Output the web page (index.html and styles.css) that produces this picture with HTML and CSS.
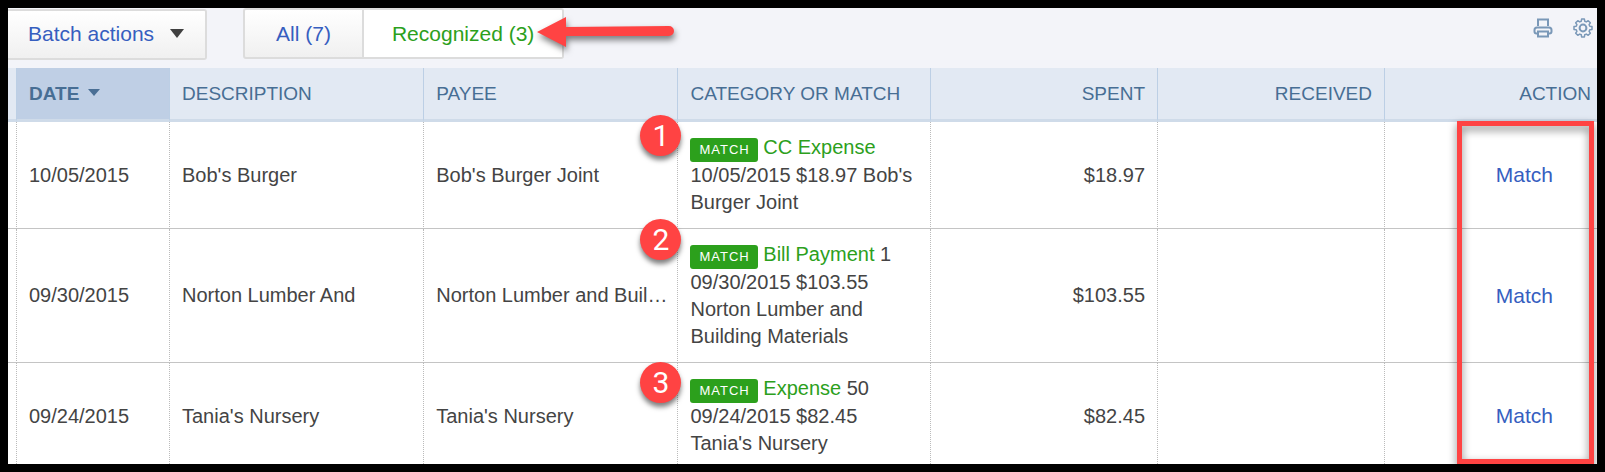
FILE: index.html
```html
<!DOCTYPE html>
<html lang="en">
<head>
  <meta charset="UTF-8" />
  <title>Bank transactions</title>
  <link rel="stylesheet" href="styles.css">
</head>
<body>
  <main class="panel">
    <div class="toolbar">
      <button type="button" class="batch">Batch actions <span class="caret"></span></button>

      <div class="tabs">
        <button type="button" class="tab">All (7)</button>
        <button type="button" class="tab active">Recognized (3)</button>
        <svg class="arrow" width="150" height="46" viewBox="0 0 150 46" aria-hidden="true">
          <path d="M2 20 L31 5 V15 L134 14 A5 5 0 0 1 134 24 L31 24 V35 Z" fill="#ff4343"/>
        </svg>
      </div>

      <div class="tools">
        <button type="button" class="icon" aria-label="Print">
          <svg width="20" height="20" viewBox="0 0 20 20" fill="none" stroke="#7a98b8" stroke-width="2">
            <path d="M5 8 V1.500 H15 V8" stroke-width="2"/>
            <path d="M5 15.500 H3.500 Q1.500 15.500 1.500 13.500 V12 Q1.500 9.500 4 9.500 H16 Q18.500 9.500 18.500 12 V13.500 Q18.500 15.500 16.500 15.500 H15"/>
            <path d="M5 13.500 H15 V18.500 H5 Z"/>
          </svg>
        </button>
        <button type="button" class="icon" aria-label="Settings">
          <svg width="20" height="20" viewBox="0 0 20 20" fill="none" stroke="#7a98b8" stroke-width="1.5" stroke-linejoin="round">
            <path d="M8.600 1 H11.400 L11.700 3.200 L13.300 3.900 L15.200 2.700 L17.300 4.800 L16.100 6.700 L16.800 8.300 L19 8.600 V11.400 L16.800 11.700 L16.100 13.300 L17.300 15.200 L15.200 17.300 L13.300 16.100 L11.700 16.800 L11.400 19 H8.600 L8.300 16.800 L6.700 16.100 L4.800 17.300 L2.700 15.200 L3.900 13.300 L3.200 11.700 L1 11.400 V8.600 L3.200 8.300 L3.900 6.700 L2.700 4.800 L4.800 2.700 L6.700 3.900 L8.300 3.200 Z"/>
            <circle cx="10" cy="10" r="3.400" stroke-width="2"/>
          </svg>
        </button>
      </div>
    </div>

    <table>
      <colgroup>
        <col class="col-edge">
        <col class="col-date">
        <col class="col-text">
        <col class="col-text">
        <col>
        <col class="col-amount">
        <col class="col-amount">
        <col class="col-action">
      </colgroup>
      <thead>
        <tr>
          <td class="edge"></td>
          <th class="sorted">DATE <span class="caret small"></span></th>
          <th>DESCRIPTION</th>
          <th>PAYEE</th>
          <th>CATEGORY OR MATCH</th>
          <th class="num">SPENT</th>
          <th class="num">RECEIVED</th>
          <th class="num last">ACTION</th>
        </tr>
      </thead>
      <tbody>
        <tr>
          <td class="edge"></td>
          <td>10/05/2015</td>
          <td>Bob's Burger</td>
          <td class="payee">Bob's Burger Joint</td>
          <td>
            <span class="pin pin-1">1</span>
            <span class="badge">MATCH</span> <span class="kind">CC Expense</span><br>10/05/2015 $18.97 Bob's Burger Joint
          </td>
          <td class="num">$18.97</td>
          <td class="num"></td>
          <td class="action"><a href="#">Match</a></td>
        </tr>
        <tr>
          <td class="edge"></td>
          <td>09/30/2015</td>
          <td>Norton Lumber And</td>
          <td class="payee" title="Norton Lumber and Building Materials">Norton Lumber and Buil…</td>
          <td>
            <span class="pin pin-2">2</span>
            <span class="badge">MATCH</span> <span class="kind">Bill Payment</span> 1<br>09/30/2015 $103.55 Norton Lumber and Building Materials
          </td>
          <td class="num">$103.55</td>
          <td class="num"></td>
          <td class="action"><a href="#">Match</a></td>
        </tr>
        <tr>
          <td class="edge"></td>
          <td>09/24/2015</td>
          <td>Tania's Nursery</td>
          <td class="payee">Tania's Nursery</td>
          <td>
            <span class="pin pin-3">3</span>
            <span class="badge">MATCH</span> <span class="kind">Expense</span> 50<br>09/24/2015 $82.45 Tania's Nursery
          </td>
          <td class="num">$82.45</td>
          <td class="num"></td>
          <td class="action"><a href="#">Match</a></td>
        </tr>
      </tbody>
    </table>

    <!-- marks the action column -->
    <div class="highlight"></div>
  </main>
</body>
</html>
```

FILE: styles.css
```css
* {
  box-sizing: border-box;
}

body {
  margin: 0;
  height: 100vh;
  padding: 8px;
  background-color: #000;
  color: #444;
  font-family: "Liberation Sans", Arial, sans-serif;
  font-size: 20px;
}

.panel {
  position: relative;
  height: 100%;
  overflow: hidden;
  background-color: #fff;
}

button {
  font-family: inherit;
  cursor: pointer;
}

/* toolbar */
.toolbar {
  display: flex;
  align-items: flex-start;
  gap: 36px;
  height: 60px;
  background-color: #f3f4f9;
}

.batch,
.tab {
  height: 51px;
  padding: 0 31px;
  border: 2px solid #dcdcdc;
  background: linear-gradient(#fff, #f0f0f0);
  color: #365ebf;
  font-size: 21px;
}

.batch {
  display: flex;
  align-items: center;
  gap: 16px;
  margin-top: 1px;
  padding: 0 21px 2px 20px;
  border-left: none;
  border-radius: 0 3px 3px 0;
}

.caret {
  display: inline-block;
  border: 7px solid transparent;
  border-top: 9px solid #404040;
  border-bottom: none;
}

.caret.small {
  margin-left: 3px;
  border-width: 7px 6px 0;
  border-top-color: #4a6f95;
  vertical-align: 4px;
}

.tabs {
  position: relative;
  display: flex;
}

.tab {
  border-radius: 3px 0 0 3px;
}

.tab.active {
  padding: 0 28px;
  border-left: none;
  border-radius: 0 3px 3px 0;
  background: #fff;
  color: #2ca01c;
}

.arrow {
  position: absolute;
  top: 4px;
  left: 292px;
  filter: drop-shadow(1px 4px 3px rgba(0, 0, 0, 0.5));
}

.tools {
  display: flex;
  gap: 20px;
  margin-left: auto;
  padding: 10px 4px 0 0;
}

.icon {
  display: flex;
  padding: 0;
  border: none;
  background: none;
}

/* transactions */
table {
  width: 100%;
  table-layout: fixed;
  border-collapse: separate;
  border-spacing: 0;
}

.col-edge {
  width: 8px;
}

.col-date {
  width: 153px;
}

.col-text {
  width: 16%;
}

.col-amount {
  width: 227px;
}

.col-action {
  width: 213px;
}

th {
  height: 54px;
  padding: 0 12px;
  border-left: 1px solid #bccfe5;
  border-bottom: 3px solid #cfdbe9;
  background-color: #e2e9f3;
  color: #476e94;
  font-size: 19px;
  font-weight: normal;
  text-align: left;
}

thead .edge {
  border-bottom: 3px solid #cfdbe9;
  background-color: #e2e9f3;
}

th.sorted {
  background-color: #bfcfe5;
  font-weight: bold;
}

tbody td {
  position: relative;
  padding: 12px;
  border-left: 1px dotted #bbb;
  border-bottom: 1px solid #c4c4c4;
  line-height: 27px;
  vertical-align: middle;
}

td.edge {
  padding: 0;
  border-left: none;
}

.num {
  text-align: right;
}

th.last {
  padding-right: 6px;
}

td.payee {
  padding-right: 6px;
  white-space: nowrap;
}

.badge {
  display: inline-block;
  padding: 0 8px 0 9px;
  border-radius: 3px;
  background-color: #2ca01c;
  color: #fff;
  font-size: 13px;
  letter-spacing: 1px;
  line-height: 24px;
}

.kind {
  color: #2ca01c;
}

td.action {
  padding-right: 44px;
  text-align: right;
}

.action a {
  color: #365ebf;
  font-size: 21px;
  text-decoration: none;
}

/* callouts over the table */
.pin {
  position: absolute;
  left: -38px;
  z-index: 1;
  width: 41px;
  height: 41px;
  border-radius: 50%;
  background-color: #ff4343;
  box-shadow: 0 4px 5px rgba(0, 0, 0, 0.5);
  color: #fff;
  font-family: Roboto, sans-serif;
  font-size: 30px;
  line-height: 41px;
  text-align: center;
}

.pin-1 {
  top: -7px;
}

.pin-2 {
  top: -10px;
}

.pin-3 {
  top: -1px;
}

.highlight {
  position: absolute;
  top: 113px;
  right: 3px;
  bottom: 0;
  width: 137px;
  border: 5px solid #ff4343;
  filter: drop-shadow(0 4px 4px rgba(0, 0, 0, 0.5));
  pointer-events: none;
}
```
